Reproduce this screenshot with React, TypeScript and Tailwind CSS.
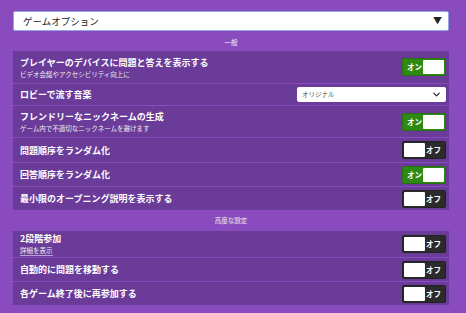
import { ChevronDown } from "lucide-react"

type rowType = {
  title: string,
  sub?: string,
  link?: string,
  on?: boolean,
  h: string
}

const Toggle = ({on}: {on: boolean}) => {
  if (on) {
    return (
      <div className="flex items-center justify-between w-[44px] h-[18px] bg-[#2f8a14] border border-[#267010] rounded-[2px] pl-[4px] pr-[1px]">
        <span className="text-[7.5px] font-bold text-white">オン</span>
        <span className="w-[21px] h-[14px] bg-white rounded-[1px]"></span>
      </div>
    )
  }
  return (
    <div className="flex items-center justify-between w-[44px] h-[18px] bg-[#2b2b2b] border border-[#222] rounded-[2px] pl-[1px] pr-[4px]">
      <span className="w-[21px] h-[14px] bg-white rounded-[1px]"></span>
      <span className="text-[7.5px] font-bold text-white">オフ</span>
    </div>
  )
}

const Row = ({title, sub, link, on, h}: rowType) => {
  return (
    <div className={`flex items-center justify-between bg-[#6a3b98] pl-[7px] pr-[3px] ${h}`}>
      <div className="flex flex-col items-start">
        <p className="text-[9px] font-bold text-white leading-[13px]">{title}</p>
        {sub && <p className="text-[6.5px] text-[#eee] leading-[10px]">{sub}</p>}
        {link && <p className="text-[6.5px] text-[#eee] leading-[10px] border-b border-[#b9a0d6]">{link}</p>}
      </div>
      <Toggle on={!!on} />
    </div>
  )
}

const Label = ({text, cls}: {text: string, cls: string}) => (
  <div className={`flex justify-center items-center text-[6.5px] text-[#eee] ${cls}`}>{text}</div>
)

export default function App() {
  return (
    <div className="w-[466px] h-[313px] bg-[#8a4bbe] pt-[11px] pl-[13px] overflow-hidden" style={{fontFamily: '"Noto Sans CJK JP", "Noto Sans", sans-serif'}}>
      <div className="w-[436px]">
        <div className="flex items-center justify-between h-[20px] bg-white border border-[#8ea6e2] rounded-[2px] pl-[9px] pr-[6px]">
          <span className="text-[9.5px] text-[#222]">ゲームオプション</span>
          <span className="text-[9px] text-[#222]">▼</span>
        </div>
        <Label text="一般" cls="h-[20px] pt-[4px]" />
        <div className="flex flex-col gap-px">
          <Row title="プレイヤーのデバイスに問題と答えを表示する" sub="ビデオ会議やアクセシビリティ向上に" on h="h-[32px]" />
          <div className="flex items-center justify-between bg-[#6a3b98] pl-[7px] pr-[3px] h-[21px]">
            <p className="text-[9px] font-bold text-white">ロビーで流す音楽</p>
            <div className="flex items-center justify-between w-[149px] h-[15px] bg-white rounded-[2px] pl-[5px] pr-[4px]">
              <span className="text-[6.5px] text-[#555]">オリジナル</span>
              <ChevronDown size={11} strokeWidth={2.5} className="text-[#222]" />
            </div>
          </div>
          <Row title="フレンドリーなニックネームの生成" sub="ゲーム内で不適切なニックネームを避けます" on h="h-[31px]" />
          <Row title="問題順序をランダム化" h="h-[24px]" />
          <Row title="回答順序をランダム化" on h="h-[23px]" />
          <Row title="最小限のオープニング説明を表示する" h="h-[23px]" />
        </div>
        <Label text="高度な設定" cls="h-[21px] pt-[1px]" />
        <div className="flex flex-col gap-px">
          <Row title="2段階参加" link="詳細を表示" h="h-[26px]" />
          <Row title="自動的に問題を移動する" h="h-[23px]" />
          <Row title="各ゲーム終了後に再参加する" h="h-[23px]" />
        </div>
      </div>
    </div>
  )
}
